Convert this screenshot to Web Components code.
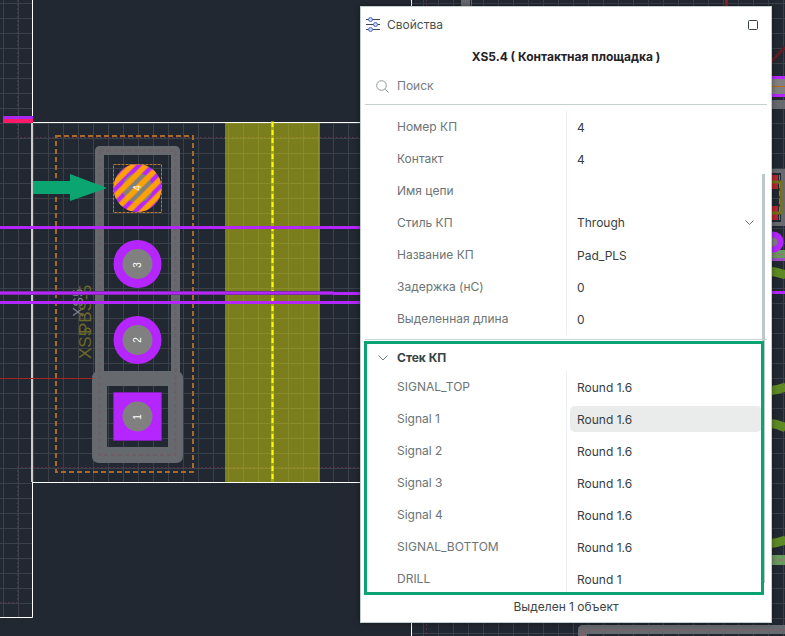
<!DOCTYPE html>
<html lang="ru">
<head>
<meta charset="utf-8">
<meta name="viewport" content="width=device-width, initial-scale=1">
<title>Свойства</title>
<style>
html,body{margin:0;min-height:100%;background:#222831}
body{font:12px/20px Inter,"Liberation Sans",sans-serif}
</style>
</head>
<body>
<pcb-app></pcb-app>

<template id="t-app">
<style>
:host{display:grid;min-height:100vh;grid-template-columns:minmax(0,1fr);overflow:hidden}
pcb-canvas,.dock{grid-area:1/1;min-width:0}
.dock{z-index:1;display:grid;align-items:start;padding:6px 13px 13px 360px}
</style>
<pcb-canvas></pcb-canvas>
<div class="dock">
<props-panel>
  <span slot="title">Свойства</span>
  <span slot="object">XS5.4 ( Контактная площадка )</span>
  <div>
  <prop-row label="Номер КП" value="4"></prop-row>
  <prop-row label="Контакт" value="4"></prop-row>
  <prop-row label="Имя цепи" value=""></prop-row>
  <prop-row label="Стиль КП" value="Through" kind="select"></prop-row>
  <prop-row label="Название КП" value="Pad_PLS"></prop-row>
  <prop-row label="Задержка (нС)" value="0"></prop-row>
  <prop-row label="Выделенная длина" value="0"></prop-row>
  </div>
  <prop-group slot="group" heading="Стек КП">
    <prop-row label="SIGNAL_TOP" value="Round 1.6"></prop-row>
    <prop-row label="Signal 1" value="Round 1.6" active></prop-row>
    <prop-row label="Signal 2" value="Round 1.6"></prop-row>
    <prop-row label="Signal 3" value="Round 1.6"></prop-row>
    <prop-row label="Signal 4" value="Round 1.6"></prop-row>
    <prop-row label="SIGNAL_BOTTOM" value="Round 1.6"></prop-row>
    <prop-row label="DRILL" value="Round 1"></prop-row>
  </prop-group>
  <span slot="status">Выделен 1 объект</span>
</props-panel>
</div>
</template>

<template id="t-panel">
<style>
:host{display:flex;flex-direction:column;background:#fff;border:1px solid #c2cece;box-shadow:0 0 6px #0006;color:#3c4444}
header{display:flex;align-items:center;height:36px;padding:0 12px 0 5px;gap:7px;color:#4a5252}
button{display:grid;place-items:center;border:0;background:none;padding:0;width:12px;height:16px}
button svg{display:block}
.sp{flex:1}
h1{margin:0;font-size:12px;line-height:28px;font-weight:700;text-align:center;color:#1f2428}
.search{display:flex;align-items:center;gap:8px;height:30px;margin:0 4px;padding:0 0 3px 11px;border-bottom:1px solid #c3d2cd}
.search input{flex:1;min-width:0;border:0;outline:0;background:none;padding:0;font:inherit;color:#333}
.search input::placeholder{color:#757d7d;opacity:1}
.search svg{flex:none}
.list{position:relative;padding:6px 4px 0 3px}
.list hr{margin:4px 0 1px 1px;border:0;border-top:1px solid #ccd3d3}
.thumb{position:absolute;right:6px;top:69px;bottom:12px;width:3px;background:#bcc9c8}
footer{height:24px;line-height:24px;padding-bottom:3px;text-align:center}
</style>
<header>
<svg width="14" height="16" viewBox="0 0 14 16" aria-hidden="true"><path d="M0 2.500h14M0 7.500h14M0 12.500h14" stroke="#3b4652"/><g fill="#c9d7ff" stroke="#4f6bd8"><circle cx="4.500" cy="2.500" r="2"/><circle cx="9.500" cy="7.500" r="2"/><circle cx="4.500" cy="12.500" r="2"/></g></svg>
<slot name="title"></slot><span class="sp"></span>
<button type="button" aria-label="Развернуть"><svg width="10" height="10"><rect x=".5" y=".5" width="9" height="9" rx="1" fill="none" stroke="#35413f"/></svg></button>
</header>
<h1><slot name="object"></slot></h1>
<div class="search"><svg width="13" height="13" viewBox="0 0 13 13" fill="none" stroke="#8f9a98" aria-hidden="true"><circle cx="5.500" cy="5.500" r="4.800"/><path d="M9 9l3.500 3.500"/></svg>
<input type="search" aria-label="Поиск" placeholder="Поиск"></div>
<div class="list"><slot></slot><hr><div class="thumb"></div><slot name="group"></slot></div>
<footer><slot name="status"></slot></footer>
</template>

<template id="t-group">
<style>
:host{display:block;position:relative;margin-right:3px;padding-top:3px;outline:3px solid #0aa371;outline-offset:-3px;background:transparent}
button{display:flex;align-items:center;gap:9px;height:27px;border:0;background:none;padding:0 0 0 14px;font:700 12px/20px Inter,"Liberation Sans",sans-serif;color:#374341}
</style>
<button type="button" aria-expanded="true"><svg width="10" height="6" viewBox="0 0 10 6" fill="none" stroke="#6e7977"><path d="M.5.5L5 5 9.500.5"/></svg><span></span></button>
<slot></slot>
</template>

<template id="t-row">
<style>
:host{display:grid;grid-template-columns:202px minmax(0,1fr);height:32px;align-items:center;padding-right:2px}
label{padding-left:33px;color:#6c7474;white-space:nowrap}
.v{display:flex;align-items:center;height:32px;border-left:1px solid #eceef6;padding-left:3px}
input,select{appearance:none;width:100%;min-width:0;height:26px;box-sizing:border-box;border:0;border-radius:5px;outline:0;background:transparent;padding:0 7px;font:inherit;color:#373d40}
:host([active]) input{background:#eaeceb}
.s{display:grid;flex:1;align-items:center}
.s>*{grid-area:1/1}
.s svg{justify-self:end;margin-right:11px;pointer-events:none}
</style>
<label for="f"></label><div class="v"></div>
</template>

<template id="t-canvas">
<style>
:host{display:block;position:relative;background:#222831;overflow:hidden}
svg{position:absolute;inset:0;width:100%;height:100%;display:block}
text{font-family:"Liberation Sans",sans-serif}
</style>
<svg role="img" aria-label="Печатная плата">
<defs>
<pattern id="grid" width="15" height="15" patternUnits="userSpaceOnUse" x="3" y="3"><path d="M.5 0v15M0 .5h15" stroke="#3a4148"/></pattern>
<pattern id="hatch" width="10" height="10" patternUnits="userSpaceOnUse" patternTransform="translate(137.500 188) rotate(-45)"><path d="M0 0h10M0 10h10" stroke="#ffa200" stroke-width="5.500"/></pattern>
</defs>
<path d="M0 0H32V617H0zM33 123H411V482H33zM411 0H2000V900H411z" fill="url(#grid)"/>
<g fill="none" stroke="#663052" stroke-dasharray="2 2" opacity=".8"><path d="M17.500 0V137.500H411"/><path d="M411 467.500H17.500V602.500H0"/><path d="M426.500 0V636"/></g>
<path d="M32.500 0V617.500H0M32 122.500H411M32 482.500H411M411.500 0V636" fill="none" stroke="#fff"/>
<path d="M32 123V482" stroke="#ccc" stroke-width="2"/>
<path d="M3 117.500H33" stroke="#a829ed" stroke-width="3"/><path d="M3 121H33" stroke="#ff1a68" stroke-width="4"/>
<path d="M225 123h95v359h-95z" fill="#ffff00" opacity=".4"/>
<path d="M272.500 121V482" stroke="#b8b800" stroke-width="3" opacity=".7"/><path d="M272.500 122V482" stroke="#ff0" stroke-width="2" stroke-dasharray="5 3"/>
<rect x="56" y="136" width="137" height="336" fill="none" stroke="#a76a2d" stroke-width="2" stroke-dasharray="5 3"/>
<g fill="none" stroke="#666a6e">
<path d="M99.500 374V150.500H175.500V374" stroke-width="9" stroke-linejoin="round"/>
<path fill="#666a6e" fill-rule="evenodd" stroke="none" d="M99 371h77q7 0 7 8v77q0 7-7 7h-77q-7 0-7-7v-77q0-8 7-8zM107 386v61h61v-61z"/>
<path d="M99.500 150.500H175.500V455H99.500z" stroke="#79525f" stroke-width="2" stroke-dasharray="4 3" opacity=".5"/></g>
<path d="M0 378.500H93" stroke="#a52525"/>
<g><circle cx="137.500" cy="188" r="24" fill="#b526ff"/><circle cx="137.500" cy="188" r="15" fill="#808080"/><circle cx="137.500" cy="188" r="24" fill="url(#hatch)"/>
<rect x="113.500" y="164.500" width="48" height="48" fill="none" stroke="#b87831" stroke-dasharray="3 1"/>
<circle cx="137.500" cy="264" r="24" fill="#b526ff"/><circle cx="137.500" cy="264" r="15" fill="#808080"/>
<circle cx="137.500" cy="340" r="24" fill="#b526ff"/><circle cx="137.500" cy="340" r="15" fill="#808080"/>
<path d="M113.500 392.500h48v48h-48z" fill="#b526ff" stroke="#831eb5"/><circle cx="137.500" cy="416.500" r="15" fill="#808080"/></g>
<g fill="#fff" font-size="10" text-anchor="middle">
<text transform="translate(141 188) rotate(-90)">4</text><text transform="translate(141 265) rotate(-90)">3</text><text transform="translate(141 340) rotate(-90)">2</text><text transform="translate(141 417) rotate(-90)">1</text></g>
<text transform="translate(83 317) rotate(-90)" font-size="15" fill="#7d8186">XS5</text>
<g fill="#6b6828"><text transform="translate(91 359) rotate(-90)" font-size="17">XS5</text><text transform="translate(91 334) rotate(-90)" font-size="17">PBS-5</text></g>
<path d="M0 227.500H411M0 302.500H411M333 293.500H411" stroke="#b526ff" stroke-width="3"/><path d="M0 293H333" stroke="#7e2baa" stroke-width="4"/><path d="M0 293H333" stroke="#b526ff" stroke-width="2"/>
<path d="M33 181h37v-7l37 14-37 13v-7H33z" fill="#0ba572"/>
<path d="M461 0h9v8h-9z" fill="#666a6e"/><path d="M471.500 0v8" stroke="#835c6a"/><path d="M726.500 0v8" stroke="#8d2026" stroke-width="3"/><path d="M771 62l14-15" stroke="#641c24" stroke-width="3"/>
<path d="M771 76h14v21h-14z" fill="#b526ff"/><path d="M771 79h14v15h-14z" fill="#808080"/><path d="M771 86.500h14" stroke="#b86a16"/><path d="M771 100h14v9h-14z" fill="#666a6e"/>
<path d="M765 171h18v53h-18" fill="none" stroke="#666a6e" stroke-width="4"/><path d="M771 175h7v14h-7zM771 206h7v14h-7z" fill="#b52632"/><path d="M771 182h10v31h-10" fill="none" stroke="#77701a" stroke-width="3"/><path d="M779.500 175v45" stroke="#9b7078" stroke-dasharray="5 3"/>
<path d="M771 250h14v8h-14z" fill="#699a5d"/><path d="M771 254.500h14" stroke="#a06b80" stroke-dasharray="5 2"/><path d="M771 259.500h14" stroke="#9a4fc0" stroke-width="3"/><circle cx="773" cy="242" r="7.500" fill="#808080" stroke="#b526ff" stroke-width="6"/><path d="M771 292.500h14" stroke="#b526ff" stroke-width="3"/>
<g fill="none" stroke="#5d8a25" stroke-width="9"><path d="M768 271q10 1 18 4M768 391q10-1 18-4M768 423q10 1 18 5M768 544q10-1 18-4"/></g>
<path d="M771 555h14v10h-14z" fill="#699a5d"/><path d="M771 560h14" stroke="#a06b80" stroke-dasharray="5 2"/>
<path d="M785 625H583q-5 0-5 5v6h9v-2h198z" fill="#666a6e"/><path d="M582.500 636v-6H785" stroke="#885967" stroke-dasharray="5 3" fill="none"/>
</svg>
</template>

<script>
const stamp = (el, id) => {
  const root = el.attachShadow({mode: 'open'});
  root.append(document.getElementById(id).content.cloneNode(true));
  return root;
};
customElements.define('prop-row', class extends HTMLElement {
  connectedCallback() {
    if (this.shadowRoot) return;
    const root = stamp(this, 't-row');
    root.querySelector('label').textContent = this.getAttribute('label');
    const box = root.querySelector('.v');
    const value = this.getAttribute('value');
    if (this.getAttribute('kind') === 'select') {
      box.innerHTML = '<div class="s"><select id="f"><option></option></select><svg width="9" height="6" viewBox="0 0 9 6" fill="none" stroke="#667270"><path d="M.5.5l4 4 4-4"/></svg></div>';
      box.querySelector('option').textContent = value;
    } else {
      box.innerHTML = '<input id="f" type="text">';
      box.firstChild.value = value;
    }
  }
});
customElements.define('prop-group', class extends HTMLElement {
  connectedCallback() {
    if (this.shadowRoot) return;
    stamp(this, 't-group').querySelector('button span').textContent = this.getAttribute('heading');
  }
});
for (const [name, id] of [['props-panel', 't-panel'], ['pcb-canvas', 't-canvas'], ['pcb-app', 't-app']]) {
  customElements.define(name, class extends HTMLElement {
    connectedCallback() { if (!this.shadowRoot) stamp(this, id); }
  });
}
</script>
</body>
</html>
